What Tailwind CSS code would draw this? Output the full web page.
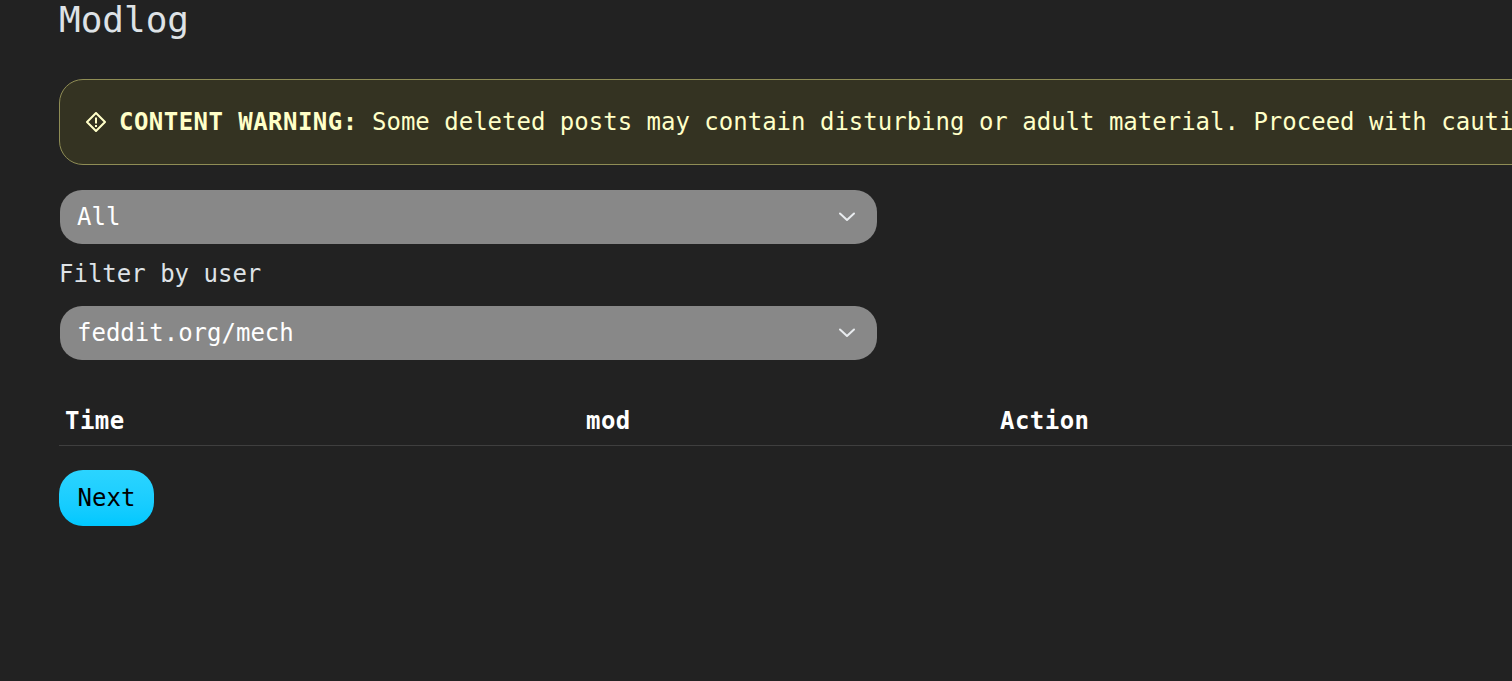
<!DOCTYPE html>
<html lang="en">
  <head>
    <meta charset="UTF-8" />
    <meta name="viewport" content="width=device-width, initial-scale=1.0" />
    <title>Modlog</title>
    <script src="https://cdn.jsdelivr.net/npm/@tailwindcss/browser@4"></script>
  </head>

  <body class="h-[681px] overflow-hidden bg-[#222222] font-['DejaVu_Sans_Mono',monospace] text-[#dee2e6]">
    <main class="w-[1700px] pl-[59px]">
      <h1 class="h-[79px] text-[36px] leading-[40px] text-[#dee2e6]">Modlog</h1>

      <!-- Warning -->
      <div class="flex h-[86px] items-center gap-[13px] rounded-[24px] border border-[#8f8d55] bg-[#343322] pl-[26px] text-[24px] text-[#ffffc8]">
        <svg class="h-[20px] w-[20px] shrink-0" viewBox="0 0 20 20" fill="none" stroke="currentColor" stroke-width="2">
          <path d="M10 1 19 10 10 19 1 10Z" stroke-linejoin="round" />
          <path d="M10 5.5V11.5M10 13V15" />
        </svg>
        <p class="whitespace-nowrap"><b class="tracking-[0.46px]">CONTENT WARNING:</b> Some deleted posts may contain disturbing or adult material. Proceed with caution.</p>
      </div>

      <!-- Filters -->
      <div class="relative mt-[25px] ml-px flex h-[54px] w-[817px] items-center rounded-[22px] bg-[#888888] pl-[17px] text-[24px] text-white">
        All
        <svg class="absolute right-[22px] h-[16px] w-[16px]" viewBox="0 0 16 16" fill="none" stroke="#e9ecef" stroke-width="2" stroke-linecap="round" stroke-linejoin="round"><path d="M1 4.5 8 11 15 4.5" /></svg>
      </div>
      <label class="mt-[20px] block text-[24px] leading-[20px] text-[#dee2e6]">Filter by user</label>
      <div class="relative mt-[22px] ml-px flex h-[54px] w-[817px] items-center rounded-[22px] bg-[#888888] pl-[17px] text-[24px] text-white">
        feddit.org/mech
        <svg class="absolute right-[22px] h-[16px] w-[16px]" viewBox="0 0 16 16" fill="none" stroke="#e9ecef" stroke-width="2" stroke-linecap="round" stroke-linejoin="round"><path d="M1 4.5 8 11 15 4.5" /></svg>
      </div>

      <!-- Table head -->
      <div class="mt-[36px] flex h-[50px] items-center border-b border-[#3f3f3f] text-[24px] font-bold tracking-[0.46px] text-white">
        <div class="w-[527px] pl-[6px]">Time</div>
        <div class="w-[414px]">mod</div>
        <div>Action</div>
      </div>

      <button class="mt-[24px] block h-[56px] w-[95px] rounded-[24px] bg-gradient-to-b from-[#2bd4ff] to-[#00c8ff] text-[24px] text-black">Next</button>
    </main>
  </body>
</html>
